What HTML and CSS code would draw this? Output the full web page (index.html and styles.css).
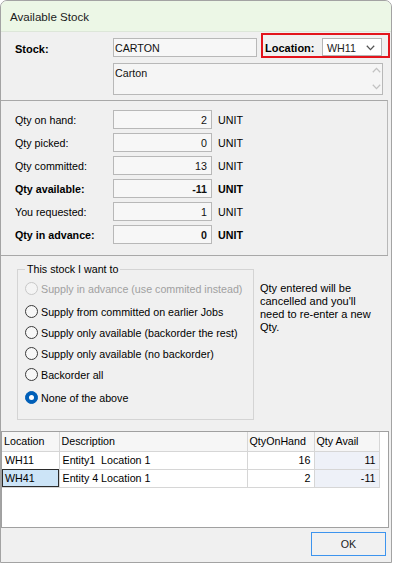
FILE: index.html
```html
<!DOCTYPE html>
<html>
<head>
<meta charset="utf-8">
<link rel="stylesheet" href="styles.css">
</head>
<body>
<div class="window">
  <div class="titlebar">Available Stock</div>
  <section class="top">
    <div class="top-row">
      <span class="stock-lbl bold">Stock:</span>
      <div class="field stock-field">CARTON</div>
      <div class="locbox">
        <span class="loc-lbl bold">Location:</span>
        <div class="combo">
          <span>WH11</span>
          <svg class="chev" width="9" height="6" viewBox="0 0 9 6"><polyline points="0.8,0.8 4.5,4.6 8.2,0.8" fill="none" stroke="#555" stroke-width="1.3"/></svg>
        </div>
      </div>
    </div>
    <div class="desc">
      <span>Carton</span>
      <div class="scroll">
        <svg width="9" height="6" viewBox="0 0 9 6"><polyline points="0.8,5.2 4.5,1.4 8.2,5.2" fill="none" stroke="#c2c2c2" stroke-width="1.3"/></svg>
        <svg width="9" height="6" viewBox="0 0 9 6"><polyline points="0.8,0.8 4.5,4.6 8.2,0.8" fill="none" stroke="#c2c2c2" stroke-width="1.3"/></svg>
      </div>
    </div>
  </section>

  <section class="qty">
    <span class="qlbl">Qty on hand:</span><div class="field num">2</div><span class="unit">UNIT</span>
    <span class="qlbl">Qty picked:</span><div class="field num">0</div><span class="unit">UNIT</span>
    <span class="qlbl">Qty committed:</span><div class="field num">13</div><span class="unit">UNIT</span>
    <span class="qlbl bold">Qty available:</span><div class="field num bold">-11</div><span class="unit bold">UNIT</span>
    <span class="qlbl">You requested:</span><div class="field num">1</div><span class="unit">UNIT</span>
    <span class="qlbl bold">Qty in advance:</span><div class="field num bold">0</div><span class="unit bold">UNIT</span>
  </section>

  <section class="options">
    <fieldset class="group">
      <legend>This stock I want to</legend>
      <div class="radio disabled first"><span class="dot"></span>Supply in advance (use commited instead)</div>
      <div class="radio gap"><span class="dot"></span>Supply from committed on earlier Jobs</div>
      <div class="radio"><span class="dot"></span>Supply only available (backorder the rest)</div>
      <div class="radio"><span class="dot"></span>Supply only available (no backorder)</div>
      <div class="radio"><span class="dot"></span>Backorder all</div>
      <div class="radio checked gap"><span class="dot"></span>None of the above</div>
    </fieldset>
    <p class="note">Qty entered will be<br>cancelled and you'll<br>need to re-enter a new<br>Qty.</p>
  </section>

  <div class="grid">
    <table>
      <colgroup><col class="c1"><col class="c2"><col class="c3"><col class="c4"><col></colgroup>
      <thead>
        <tr><th>Location</th><th class="desc-h">Description</th><th>QtyOnHand</th><th>Qty Avail</th><th class="blank"></th></tr>
      </thead>
      <tbody>
        <tr><td class="loc">WH11</td><td class="d">Entity1&nbsp; Location 1</td><td class="n">16</td><td class="n avail">11</td><td class="blank"></td></tr>
        <tr><td class="loc sel">WH41</td><td class="d">Entity 4 Location 1</td><td class="n">2</td><td class="n avail">-11</td><td class="blank"></td></tr>
      </tbody>
    </table>
  </div>

  <div class="footer">
    <button class="ok">OK</button>
  </div>
</div>
</body>
</html>
```

FILE: styles.css
```css
* { box-sizing: border-box; }

body {
  margin: 0;
  background: #ffffff;
  font-family: "Liberation Sans", Arial, sans-serif;
  font-size: 10.7px;
  color: #000;
}

.bold { font-weight: bold; }

.window {
  width: 392px;
  height: 563px;
  border: 1px solid #a3a3a3;
  border-radius: 7px 7px 0 0;
  overflow: hidden;
  background: #f0f0f0;
  display: flex;
  flex-direction: column;
}

.titlebar {
  height: 31px;
  flex: none;
  background: #ecf7e6;
  border-bottom: 1px solid #dde6d9;
  padding-left: 9px;
  display: flex;
  align-items: center;
  font-size: 11.6px;
  color: #1b1b1b;
}

/* top panel */
.top {
  height: 68px;
  flex: none;
  padding-top: 1px;
}

.top-row {
  display: flex;
  align-items: flex-start;
  height: 25px;
}

.stock-lbl {
  width: 112px;
  padding-left: 14px;
  margin-top: 10px;
  font-size: 11px;
}

.field {
  height: 19px;
  background: #f7f7f7;
  border: 1px solid #b8b8b8;
  display: flex;
  align-items: center;
  padding: 0 3px 0 1px;
  color: #111;
}

.stock-field {
  width: 144px;
  margin-top: 5px;
  padding-top: 1px;
}

.locbox {
  margin-left: 4px;
  width: 129px;
  height: 25px;
  border: 2px solid #e3141c;
  display: flex;
  align-items: flex-start;
  padding-left: 2px;
}

.loc-lbl {
  width: 57px;
  margin-top: 7px;
  font-size: 11px;
}

.combo {
  margin-top: 3px;
  width: 60px;
  height: 18px;
  background: #fff;
  border: 1px solid #b5b5b5;
  display: flex;
  align-items: center;
  justify-content: space-between;
  padding: 2px 6px 0 4px;
  color: #222;
}

.chev { margin-top: -1px; }

.desc {
  margin: 5px 0 0 112px;
  width: 270px;
  height: 32px;
  background: #f5f5f5;
  border: 1px solid #b8b8b8;
  display: flex;
  justify-content: space-between;
  padding: 3px 0 0 1px;
  color: #111;
}

.scroll {
  width: 12px;
  display: flex;
  flex-direction: column;
  justify-content: space-between;
  align-items: center;
  padding: 2px 0 4px;
  margin-top: -2px;
}

/* qty panel */
.qty {
  flex: none;
  width: 387px;
  height: 155px;
  border-top: 1px solid #a8a8a8;
  border-right: 1px solid #b8b8b8;
  padding: 9px 0 0 14px;
  display: grid;
  grid-template-columns: 98px 99px auto;
  grid-auto-rows: 19px;
  row-gap: 4px;
  align-items: center;
}

.num {
  justify-content: flex-end;
  padding-right: 4px;
}

.unit {
  margin-left: 6px;
}

/* options */
.options {
  flex: none;
  width: 387px;
  height: 176px;
  border-top: 1px solid #a8a8a8;
  display: flex;
  align-items: flex-start;
  padding: 7px 0 0 16px;
}

.group {
  margin: 0;
  width: 237px;
  height: 157px;
  border: 1px solid #d4d4d4;
  padding: 2px 0 0 7px;
  display: flex;
  flex-direction: column;
}

.group legend {
  padding: 0 2px;
  margin-left: 0;
  line-height: 13px;
  font-size: 10.7px;
}

.radio {
  height: 21px;
  display: flex;
  align-items: center;
  white-space: nowrap;
  font-size: 10.7px;
}

.radio.gap { margin-top: 2px; }

.dot {
  width: 13px;
  height: 13px;
  border-radius: 50%;
  border: 1px solid #3a3a3a;
  background: #f7f7f7;
  margin-right: 3px;
  flex: none;
  display: flex;
  align-items: center;
  justify-content: center;
}

.disabled { color: #a0a0a0; }
.disabled .dot { border-color: #c8c8c8; background: #f4f4f4; }

.checked .dot {
  background: #005fb8;
  border-color: #005fb8;
}
.checked .dot::after {
  content: "";
  width: 5px;
  height: 5px;
  border-radius: 50%;
  background: #fff;
}

.note {
  margin: 19px 0 0 6px;
  line-height: 13px;
  font-size: 11px;
}

/* grid */
.grid {
  flex: none;
  width: 388px;
  height: 97px;
  background: #fff;
  border: 1px solid #a0a0a0;
}

table {
  border-collapse: collapse;
  table-layout: fixed;
  width: 386px;
}

col.c1 { width: 57px; }
col.c2 { width: 188px; }
col.c3 { width: 67px; }
col.c4 { width: 65px; }

th, td {
  padding: 0 2px;
  text-align: left;
  font-weight: normal;
  white-space: nowrap;
  overflow: hidden;
  border-right: 1px solid #d6d6d6;
  border-bottom: 1px solid #d6d6d6;
}

th {
  height: 19px;
  background: #f6f6f6;
}

th.desc-h { border-left: 1px solid #e8c79a; }

td { height: 18px; }

th.blank, td.blank {
  border: none;
  background: #fff;
}

td.loc { padding-left: 3px; }
td.d { padding-left: 3px; }
td.n { text-align: right; padding-right: 3px; }
td.avail { background: #eef1f8; }

td.sel {
  background: #cce4f7;
  outline: 1px solid #2b2b2b;
  outline-offset: -1px;
}

/* footer */
.footer {
  flex: 1;
  padding: 4px 0 0 310px;
}

.ok {
  width: 75px;
  height: 24px;
  border: 1px solid #3d94ee;
  background: #f1f1f1;
  font-family: "Liberation Sans", Arial, sans-serif;
  font-size: 10.7px;
  color: #222;
  padding: 0;
}
```
